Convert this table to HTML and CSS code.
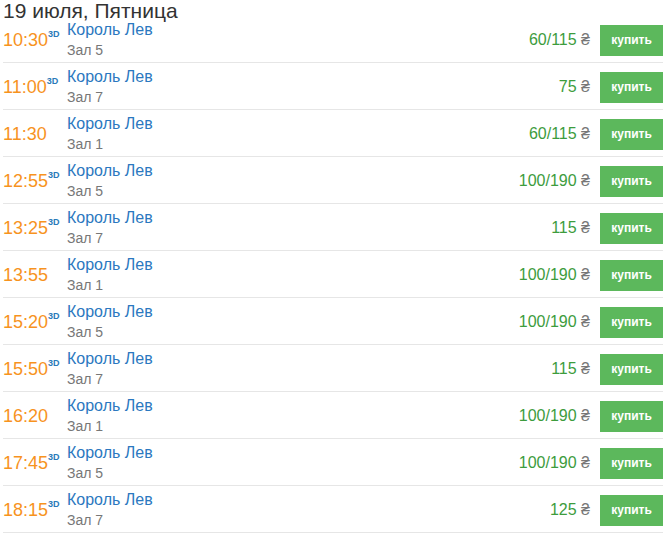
FILE: index.html
```html
<!DOCTYPE html>
<html lang="ru">
<head>
<meta charset="utf-8">
<link rel="stylesheet" href="styles.css">
</head>
<body>
<div class="day">
  <div class="day-title">19 июля, Пятница</div>
  <div class="row"><div class="time">10:30<span class="fmt">3D</span></div><div class="info"><a class="film">Король Лев</a><div class="hall">Зал 5</div></div><div class="price">60/115 <span class="cur">₴</span></div><a class="buy">купить</a></div>
  <div class="row"><div class="time">11:00<span class="fmt">3D</span></div><div class="info"><a class="film">Король Лев</a><div class="hall">Зал 7</div></div><div class="price">75 <span class="cur">₴</span></div><a class="buy">купить</a></div>
  <div class="row"><div class="time">11:30</div><div class="info"><a class="film">Король Лев</a><div class="hall">Зал 1</div></div><div class="price">60/115 <span class="cur">₴</span></div><a class="buy">купить</a></div>
  <div class="row"><div class="time">12:55<span class="fmt">3D</span></div><div class="info"><a class="film">Король Лев</a><div class="hall">Зал 5</div></div><div class="price">100/190 <span class="cur">₴</span></div><a class="buy">купить</a></div>
  <div class="row"><div class="time">13:25<span class="fmt">3D</span></div><div class="info"><a class="film">Король Лев</a><div class="hall">Зал 7</div></div><div class="price">115 <span class="cur">₴</span></div><a class="buy">купить</a></div>
  <div class="row"><div class="time">13:55</div><div class="info"><a class="film">Король Лев</a><div class="hall">Зал 1</div></div><div class="price">100/190 <span class="cur">₴</span></div><a class="buy">купить</a></div>
  <div class="row"><div class="time">15:20<span class="fmt">3D</span></div><div class="info"><a class="film">Король Лев</a><div class="hall">Зал 5</div></div><div class="price">100/190 <span class="cur">₴</span></div><a class="buy">купить</a></div>
  <div class="row"><div class="time">15:50<span class="fmt">3D</span></div><div class="info"><a class="film">Король Лев</a><div class="hall">Зал 7</div></div><div class="price">115 <span class="cur">₴</span></div><a class="buy">купить</a></div>
  <div class="row"><div class="time">16:20</div><div class="info"><a class="film">Король Лев</a><div class="hall">Зал 1</div></div><div class="price">100/190 <span class="cur">₴</span></div><a class="buy">купить</a></div>
  <div class="row"><div class="time">17:45<span class="fmt">3D</span></div><div class="info"><a class="film">Король Лев</a><div class="hall">Зал 5</div></div><div class="price">100/190 <span class="cur">₴</span></div><a class="buy">купить</a></div>
  <div class="row"><div class="time">18:15<span class="fmt">3D</span></div><div class="info"><a class="film">Король Лев</a><div class="hall">Зал 7</div></div><div class="price">125 <span class="cur">₴</span></div><a class="buy">купить</a></div>
</div>
</body>
</html>
```
FILE: styles.css
```css
html, body {
  margin: 0;
  padding: 0;
  background: #fff;
}
body {
  font-family: "Liberation Sans", Arial, sans-serif;
  color: #333;
}
.day {
  width: 660px;
  margin-left: 3px;
}
.day-title {
  font-size: 21px;
  line-height: 21px;
  margin-bottom: -5px;
  color: #333;
}
.row {
  display: flex;
  align-items: center;
  padding: 4px 0 2px;
  border-bottom: 1px solid #e6e6e6;
}
.time {
  width: 64px;
  flex: none;
  font-size: 18px;
  line-height: 20px;
  color: #f7931e;
  white-space: nowrap;
}
.fmt {
  font-size: 9px;
  font-weight: bold;
  color: #2a7ab9;
  vertical-align: 9px;
  line-height: 0;
}
.info {
  flex: 1;
  display: flex;
  flex-direction: column;
}
.film {
  font-size: 16px;
  line-height: 20px;
  color: #2b78c0;
}
.hall {
  font-size: 14px;
  line-height: 20px;
  color: #777;
}
.price {
  font-size: 16px;
  color: #3d9c3d;
  margin-right: 10px;
}
.cur {
  color: #777;
}
.buy {
  display: block;
  flex: none;
  width: 63px;
  box-sizing: border-box;
  text-align: center;
  background: #5cb85c;
  color: #fff;
  font-size: 12px;
  font-weight: bold;
  line-height: 19px;
  padding: 6px 0;
}
```
